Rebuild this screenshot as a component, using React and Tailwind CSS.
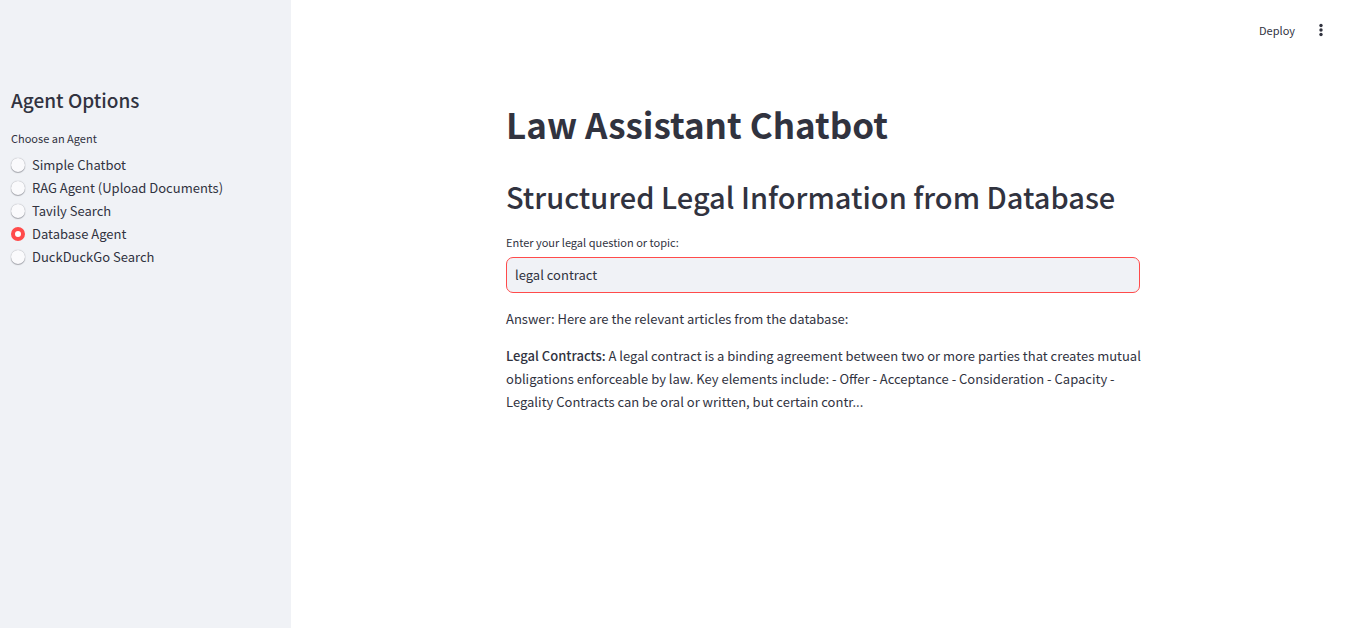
import { useState } from "react";

const agents = [
  "Simple Chatbot",
  "RAG Agent (Upload Documents)",
  "Tavily Search",
  "Database Agent",
  "DuckDuckGo Search",
];

function Sidebar() {
  const [agent, setAgent] = useState("Database Agent");
  return (
    <aside className="w-[291px] shrink-0 bg-[#f0f2f6] px-[11px] pt-[87px]">
      <h2 className="text-[19px] leading-[26px] font-medium">Agent Options</h2>
      <fieldset className="mt-[14px]">
        <legend className="text-[11px] leading-[22px]">Choose an Agent</legend>
        <div className="mt-1 flex flex-col">
          {agents.map((name) => (
            <label key={name} className="flex items-center gap-[7px] text-[13px] leading-[23px]">
              <input
                type="radio"
                name="agent"
                checked={agent === name}
                onChange={() => setAgent(name)}
                className="size-[14px] shrink-0 appearance-none rounded-full bg-[#fafafc] shadow-[0_0_1px_#31333f80,0_1px_1px_#31333f59] checked:border-[4px] checked:border-[#ff4b4b] checked:bg-white checked:shadow-none"
              />
              {name}
            </label>
          ))}
        </div>
      </fieldset>
    </aside>
  );
}

export default function App() {
  const [question, setQuestion] = useState("legal contract");
  return (
    <div className="flex min-h-screen bg-white font-['Noto_Sans_CJK_SC',sans-serif] text-[#31333f]">
      <Sidebar />
      <div className="flex min-w-0 flex-1 flex-col">
        <header className="flex h-[60px] items-center justify-end gap-[18px] pr-[26px]">
          <button type="button" className="text-[11px] leading-5">
            Deploy
          </button>
          <button type="button" aria-label="Main menu" className="size-4">
            <svg viewBox="0 0 16 16" fill="currentColor" className="size-4">
              <circle cx="8" cy="3.5" r="1.7" />
              <circle cx="8" cy="8" r="1.7" />
              <circle cx="8" cy="12.5" r="1.7" />
            </svg>
          </button>
        </header>
        <main className="mx-auto w-full max-w-[634px] pt-10">
          <h1 className="text-[35px] leading-[48px] font-bold">Law Assistant Chatbot</h1>
          <h2 className="mt-6 text-[29px] leading-[48px] font-medium">
            Structured Legal Information from Database
          </h2>
          <label htmlFor="question" className="mt-[11px] block text-[11px] leading-[22px]">
            Enter your legal question or topic:
          </label>
          <input
            id="question"
            type="text"
            value={question}
            onChange={(e) => setQuestion(e.target.value)}
            className="mt-1 block h-9 w-full rounded-[7px] border border-[#ff4b4b] bg-[#f0f2f6] px-2 pb-[2px] text-[13px] outline-none"
          />
          <div className="-mr-2 mt-[14px] flex flex-col gap-[14px] text-[13px] leading-[23px]">
            <p>Answer: Here are the relevant articles from the database:</p>
            <p>
              <strong className="font-medium">Legal Contracts:</strong> A legal contract is a
              binding agreement between two or more parties that creates mutual obligations
              enforceable by law. Key elements include: - Offer - Acceptance - Consideration -
              Capacity - Legality Contracts can be oral or written, but certain contr...
            </p>
          </div>
        </main>
      </div>
    </div>
  );
}
